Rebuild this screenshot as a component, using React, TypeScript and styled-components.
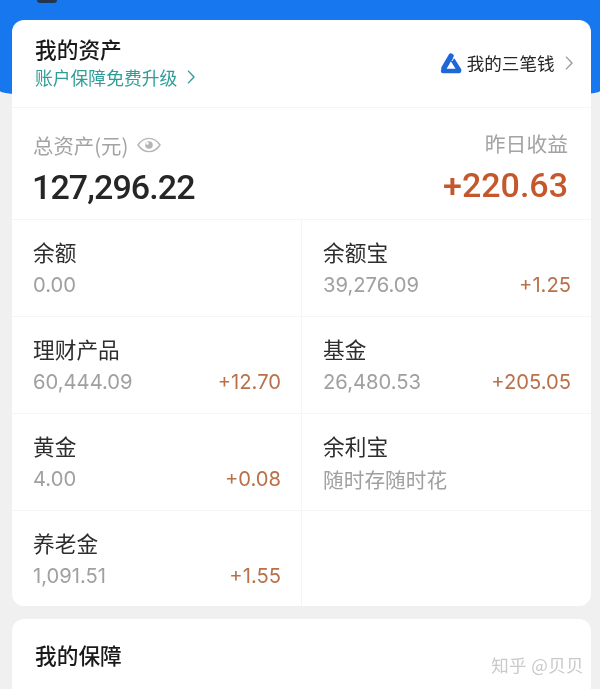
import React from "react";
import styled, { createGlobalStyle } from "styled-components";

const Global = createGlobalStyle`
  html, body { margin: 0; padding: 0; background: #f0f0f1; }
  body { font-family: "Noto Sans CJK SC", "Roboto", sans-serif; }
`;
const Page = styled.div`
  position: relative; width: 600px; height: 689px; overflow: hidden;
  background: #f0f0f1; box-sizing: border-box; padding: 20px 9px 0 12px;
  display: flex; flex-direction: column; gap: 13px;
  filter: blur(0.35px);
`;
const BlueBack = styled.div`
  position: absolute; left: 0; top: 0; width: 600px; height: 101px; background: #1677ee;
  border-radius: 0 0 300px 300px / 0 0 10px 10px;
`;
const TopMark = styled.div`
  position: absolute; left: 37px; top: 0; width: 20px; height: 3px; background: #22364f;
  border-radius: 0 0 4px 4px;
`;
const Card = styled.section`
  position: relative; background: #fff; border-radius: 12px; overflow: hidden; flex: none;
`;
const Header = styled.div`
  height: 88px; box-sizing: border-box; padding: 15px 18px 0 23px;
  display: flex; justify-content: space-between; align-items: flex-start;
  border-bottom: 1px solid #f5f5f5;
`;
const Title = styled.div`
  font-size: 21.7px; line-height: 28px; font-weight: 500; color: #1a1a1a;
`;
const Upgrade = styled.div`
  display: flex; align-items: center; gap: 10px; margin-top: 1px;
  font-size: 17.8px; line-height: 26px; color: #2f9e98;
`;
const Link = styled.div`
  display: flex; align-items: center; font-size: 17.6px; line-height: 24px; color: #262626;
  margin-top: 16px;
`;
const LinkText = styled.span`margin: 0 10px 0 5px;`;
const Totals = styled.div`
  height: 112px; box-sizing: border-box; padding: 22px 23px 0 21px;
  display: flex; justify-content: space-between;
  border-bottom: 1px solid #f5f5f5;
`;
const TotalCol = styled.div<{ $right?: boolean }>`
  display: flex; flex-direction: column; align-items: ${p => (p.$right ? "flex-end" : "flex-start")};
  margin-top: ${p => (p.$right ? "-2px" : "0")};
`;
const TotalLabel = styled.div<{ $right?: boolean }>`
  display: flex; align-items: center; gap: 9px;
  font-size: ${p => (p.$right ? "20.8px" : "20.4px")}; line-height: 30px; color: #a3a3a3;
`;
const Big = styled.div<{ $up?: boolean }>`
  font-family: "Roboto", sans-serif; font-size: 34px; line-height: 40px; font-weight: 500;
  margin-top: 7px;
  margin-left: ${p => (p.$up ? "0" : "-1px")};
  letter-spacing: ${p => (p.$up ? "0" : "-0.9px")};
  color: ${p => (p.$up ? "#c4582c" : "#262626")};
`;
const Grid = styled.div`
  display: grid; grid-template-columns: 290px 1fr; grid-template-rows: 97px 97px 97px 95px;
`;
const Cell = styled.div`
  box-sizing: border-box; padding: 15px 20px 0 21px;
  border-bottom: 1px solid #f5f5f5;
  &:nth-child(odd) { border-right: 1px solid #f5f5f5; }
  &:nth-last-child(-n + 2) { border-bottom: none; }
`;
const CellName = styled.div`
  font-size: 21.7px; line-height: 34px; color: #2e2e2e;
`;
const CellRow = styled.div`
  display: flex; justify-content: space-between; align-items: center; height: 30px; margin-top: 1px;
`;
const Value = styled.span`
  font-family: "Inter", sans-serif; font-size: 20.2px; line-height: 30px; color: #a0a0a0;
`;
const Hint = styled.span`
  font-size: 20.7px; line-height: 30px; color: #a0a0a0;
`;
const Gain = styled.span`
  font-family: "Inter", sans-serif; font-size: 20.2px; line-height: 30px; color: #b9714a;
`;
const Second = styled(Card)`
  height: 90px; padding: 22px 23px; box-sizing: border-box;
`;
const Watermark = styled.div`
  position: absolute; right: 7px; top: 36px;
  font-size: 17.5px; line-height: 20px; color: #c9c9c9; letter-spacing: 0.4px;
`;

const Chevron = ({ color, h }: { color: string; h: number }) => (
  <svg width={h * 0.6} height={h} viewBox="0 0 6 10" fill="none">
    <path d="M1 .8 5 5 1 9.2" stroke={color} strokeWidth="1" strokeLinecap="round" strokeLinejoin="round" />
  </svg>
);
const Logo = () => (
  <svg width="22" height="21" viewBox="0 0 22 21" fill="none" stroke="#1d68d8" strokeLinecap="round">
    <path d="M11 3 4 15" strokeWidth="5.4" />
    <path d="M13 7.4 19 17" strokeWidth="4.6" />
    <path d="M3 18h16" strokeWidth="4.4" />
    <path d="M8 15 10.6 10.6 13.4 15z" fill="#fff" stroke="none" />
    <path d="M14.6 3.6 12.2 7.6" stroke="#fff" strokeWidth="1" />
  </svg>
);
const Eye = () => (
  <svg width="24" height="16" viewBox="0 0 24 16" fill="none">
    <path d="M1 8c3-4.4 6.6-6.6 11-6.6S20 3.6 23 8c-3 4.4-6.6 6.6-11 6.6S4 12.4 1 8z" stroke="#b5b5b5" strokeWidth="1.4" />
    <circle cx="12" cy="8" r="3.8" fill="#b5b5b5" />
    <circle cx="10.4" cy="6.4" r="1.3" fill="#fff" />
  </svg>
);

const rows = [
  { name: "余额", value: "0.00" },
  { name: "余额宝", value: "39,276.09", gain: "+1.25" },
  { name: "理财产品", value: "60,444.09", gain: "+12.70" },
  { name: "基金", value: "26,480.53", gain: "+205.05" },
  { name: "黄金", value: "4.00", gain: "+0.08" },
  { name: "余利宝", hint: "随时存随时花" },
  { name: "养老金", value: "1,091.51", gain: "+1.55" },
  { name: "" },
];

export default function App() {
  return (
    <>
      <Global />
      <Page>
        <BlueBack />
        <TopMark />
        <Card>
          <Header>
            <div>
              <Title>我的资产</Title>
              <Upgrade>账户保障免费升级<Chevron color="#2f9e98" h={14} /></Upgrade>
            </div>
            <Link><Logo /><LinkText>我的三笔钱</LinkText><Chevron color="#9b9b9b" h={14} /></Link>
          </Header>
          <Totals>
            <TotalCol>
              <TotalLabel>总资产(元)<Eye /></TotalLabel>
              <Big>127,296.22</Big>
            </TotalCol>
            <TotalCol $right>
              <TotalLabel $right>昨日收益</TotalLabel>
              <Big $up>+220.63</Big>
            </TotalCol>
          </Totals>
          <Grid>
            {rows.map((r, i) => (
              <Cell key={i}>
                <CellName>{r.name}</CellName>
                <CellRow>
                  {r.value && <Value>{r.value}</Value>}
                  {r.hint && <Hint>{r.hint}</Hint>}
                  {r.gain && <Gain>{r.gain}</Gain>}
                </CellRow>
              </Cell>
            ))}
          </Grid>
        </Card>
        <Second>
          <Title>我的保障</Title>
          <Watermark>知乎 @贝贝</Watermark>
        </Second>
      </Page>
    </>
  );
}
